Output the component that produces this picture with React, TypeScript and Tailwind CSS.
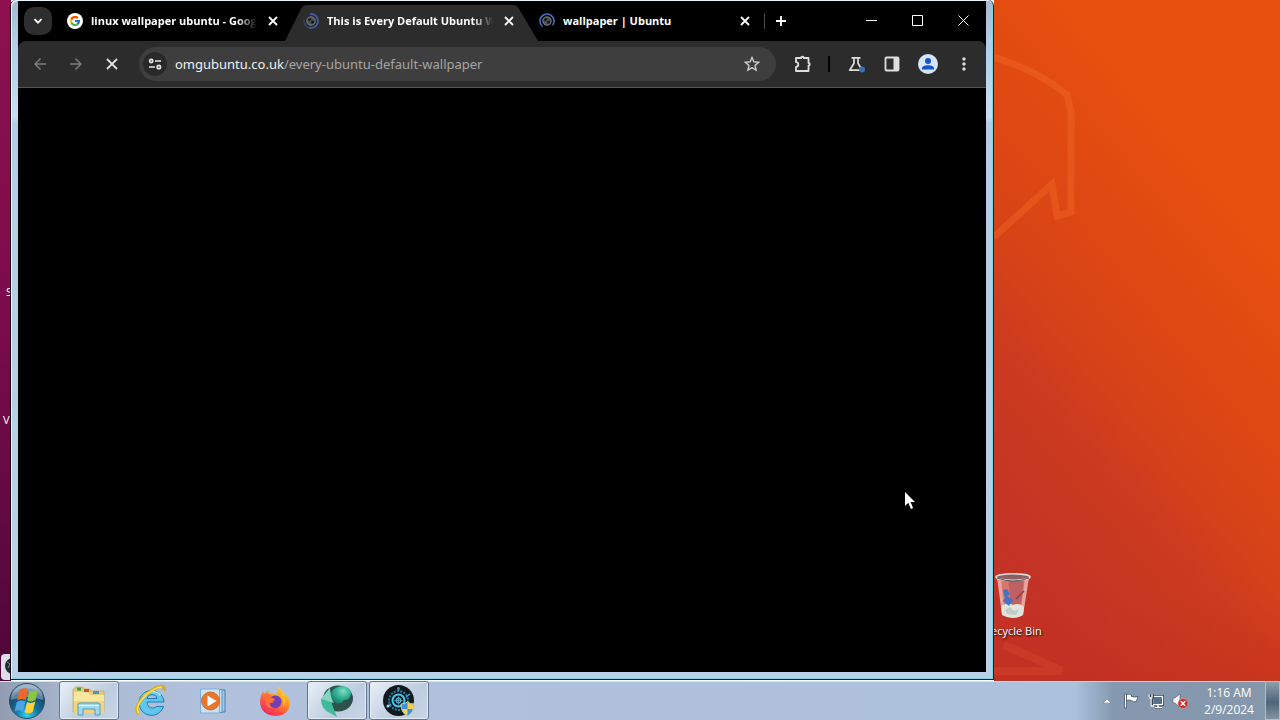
import type { ReactNode } from "react";
import { FcGoogle } from "react-icons/fc";
import {
  MdArrowBack,
  MdArrowForward,
  MdMoreVert,
  MdStarOutline,
} from "react-icons/md";

function LoadingIcon({ dim = false }: { dim?: boolean }) {
  return (
    <svg viewBox="0 0 16 16" className="size-4 shrink-0" fill="none" aria-hidden="true">
      <path
        d={dim ? "M7 1a7 7 0 0 1 8 7 7 7 0 0 1-9 6.7" : "M3.5 13.4A7 7 0 1 1 15 8c0 1.8-.5 3-1.4 4.3"}
        stroke={dim ? "#3f5fae" : "#4a6fc4"}
        strokeWidth="1.6"
      />
      {dim && <path d="M6 14.7A7 7 0 0 1 1 6.5" stroke="#33466f" strokeWidth="1.2" />}
      <circle cx="8" cy="8" r="4.6" fill="#4c5157" />
      <path d="M5 6l2.5-1 1 1.5-2 1.6L5 7.4zM8.5 8l3-.5-.6 2.4-2 1.2-.8-1.6z" fill="#16181b" />
      <circle cx="8" cy="8" r="4.2" stroke="#85898e" strokeWidth=".7" />
    </svg>
  );
}

function Glyph({ path, size, width }: { path: string; size: string; width: string }) {
  return (
    <svg viewBox="0 0 12 12" className={"shrink-0 " + size} fill="none" stroke="currentColor" strokeWidth={width} aria-hidden="true">
      <path d={path} />
    </svg>
  );
}

function Tab({
  icon,
  title,
  active = false,
  fade = false,
}: {
  icon: ReactNode;
  title: string;
  active?: boolean;
  fade?: boolean;
}) {
  return (
    <div role="tab" aria-selected={active} className="relative flex h-10 w-[236px] shrink-0 items-center pl-2">
      {active && (
        <svg
          viewBox="0 0 253 36"
          preserveAspectRatio="none"
          className="absolute bottom-0 -left-[10px] h-9 w-[253px]"
          aria-hidden="true"
        >
          <path d="M0 36L16 4Q18 0 22 0H228Q232 0 234 4L253 36z" fill="#2c2c2c" />
        </svg>
      )}
      <span className="relative flex shrink-0">{icon}</span>
      <span
        className={
          "relative ml-2 w-[166px] overflow-hidden text-[11px] leading-4 font-bold whitespace-nowrap text-white " +
          (fade ? "[mask-image:linear-gradient(to_right,black_88%,transparent)]" : "")
        }
      >
        {title}
      </span>
      <button type="button" aria-label={"Close " + title} className="relative ml-2 flex size-4 items-center justify-center text-white">
        <Glyph path="M2 2l8 8M10 2l-8 8" size="size-3" width="1.8" />
      </button>
    </div>
  );
}

function ToolButton({ label, children, dim = false }: { label: string; children: ReactNode; dim?: boolean }) {
  return (
    <button
      type="button"
      aria-label={label}
      className={"flex h-9 w-9 shrink-0 items-center justify-center " + (dim ? "text-[#7c7c7c]" : "text-[#dedede]")}
    >
      {children}
    </button>
  );
}

function CaptionButton({ label, path }: { label: string; path: string }) {
  return (
    <button type="button" aria-label={label} className="flex h-[38px] w-[46px] items-center justify-center">
      <svg viewBox="0 0 11 11" className="size-[11px]" fill="none" stroke="#fff" aria-hidden="true">
        <path d={path} />
      </svg>
    </button>
  );
}

function TabStrip() {
  return (
    <div className="flex h-10 items-center bg-black">
      <button
        type="button"
        aria-label="Search tabs"
        className="mr-[7px] ml-1.5 flex size-7 shrink-0 items-center justify-center rounded-[10px] bg-[#2e2e2e] text-white"
      >
        <Glyph path="M2.500 4.200L6 7.700l3.500-3.500" size="size-3" width="1.8" />
      </button>
      <div role="tablist" aria-label="Tabs" className="-mr-1 flex">
        <Tab
          icon={
            <span className="rounded-full bg-white p-0.5">
              <FcGoogle className="size-3" />
            </span>
          }
          title="linux wallpaper ubuntu - Goog"
          fade
        />
        <Tab icon={<LoadingIcon dim />} title="This is Every Default Ubuntu W" active fade />
        <Tab icon={<LoadingIcon />} title="wallpaper | Ubuntu" />
      </div>
      <span className="ml-px h-4 w-px bg-[#4a4a4a]" />
      <button type="button" aria-label="New tab" className="ml-2 flex size-4 items-center justify-center text-white">
        <Glyph path="M6 1v10M1 6h10" size="size-3" width="1.8" />
      </button>
      <div className="mb-0.5 ml-auto flex">
        <CaptionButton label="Minimize" path="M0 5.5h11" />
        <CaptionButton label="Maximize" path="M.5.5h10v10H.5z" />
        <CaptionButton label="Close" path="M.5.5l10 10M10.5.5l-10 10" />
      </div>
    </div>
  );
}

function Toolbar() {
  return (
    <div className="bg-black">
      <div className="flex h-[47px] items-center rounded-t-lg border-b border-[#555] bg-[#2c2c2c] px-1">
        <ToolButton label="Back" dim>
          <MdArrowBack className="size-[18px]" />
        </ToolButton>
        <ToolButton label="Forward" dim>
          <MdArrowForward className="size-[18px]" />
        </ToolButton>
        <ToolButton label="Stop loading">
          <Glyph path="M1 1l10 10M11 1L1 11" size="size-3" width="1.9" />
        </ToolButton>
        <div className="mr-[9px] ml-[9px] flex h-[34px] min-w-0 flex-1 items-center rounded-full bg-[#3e3e3e] pr-3.5 pl-1">
          <button
            type="button"
            aria-label="View site information"
            className="flex size-6 shrink-0 items-center justify-center rounded-full bg-[#292929]"
          >
            <svg viewBox="0 0 14 14" className="size-3.5" fill="none" stroke="#e8e8e8" strokeWidth="1.7" aria-hidden="true">
              <circle cx="3.2" cy="4" r="1.6" />
              <path d="M7 4h6M1 10h6" />
              <circle cx="10.8" cy="10" r="1.7" />
            </svg>
          </button>
          <div className="relative ml-2 min-w-0 flex-1 font-['Noto_Sans','Open_Sans',sans-serif] text-[13px] leading-5">
            <div aria-hidden="true" className="whitespace-nowrap text-[#a5a5a5]">
              <span className="text-[#f1f1f1]">omgubuntu.co.uk</span>/every-ubuntu-default-wallpaper
            </div>
            <input
              aria-label="Address and search bar"
              defaultValue="omgubuntu.co.uk/every-ubuntu-default-wallpaper"
              className="absolute inset-0 w-full bg-transparent text-transparent outline-none"
            />
          </div>
          <button type="button" aria-label="Bookmark this tab" className="text-[#d0d0d0]">
            <MdStarOutline className="size-5" />
          </button>
        </div>
        <ToolButton label="Extensions">
          <svg viewBox="0 0 18 18" className="size-[18px]" fill="none" stroke="currentColor" strokeWidth="1.8" strokeLinejoin="round" aria-hidden="true">
            <path d="M2 3h5.200a1.300 1.300 0 0 1 2.600 0H14.500v5a1.300 1.300 0 0 1 0 2.600V16H2v-4.200a2.300 2.300 0 0 0 0-4.600z" />
          </svg>
        </ToolButton>
        <span className="mr-2 ml-[7px] h-4 w-[2px] shrink-0 bg-black" />
        <ToolButton label="Experiments">
          <svg viewBox="0 0 18 18" className="size-[18px]" fill="none" stroke="#dedede" strokeWidth="1.700" aria-hidden="true">
            <path d="M4.500 2.800h9M7 3v5.200L2.700 15.200H14M11 3v5.200l3 5" strokeLinejoin="round" />
            <circle cx="15" cy="14.500" r="3" fill="#3472bd" stroke="none" />
          </svg>
        </ToolButton>
        <ToolButton label="Side panel">
          <svg viewBox="0 0 16 16" className="size-4" aria-hidden="true">
            <rect x="1.500" y="1.500" width="13" height="13" rx="1" fill="none" stroke="#dedede" strokeWidth="1.800" />
            <path d="M9.500 1.500h5v13h-5z" fill="#dedede" />
          </svg>
        </ToolButton>
        <ToolButton label="Profile">
          <svg viewBox="0 0 20 20" className="size-5" aria-hidden="true">
            <circle cx="10" cy="10" r="10" fill="#d5e5fb" />
            <circle cx="10" cy="7" r="3" fill="#1755ca" />
            <path d="M4 15.5v-1.2c0-1.9 2.7-3 6-3s6 1.1 6 3v1.2z" fill="#1755ca" />
          </svg>
        </ToolButton>
        <ToolButton label="Menu">
          <MdMoreVert className="size-5" />
        </ToolButton>
      </div>
    </div>
  );
}

function BrowserWindow() {
  return (
    <section
      aria-label="Browser"
      className="absolute top-0 bottom-px left-[11px] z-10 flex w-[983px] flex-col rounded-t-md border-r border-b border-[#10272f] bg-[linear-gradient(#a5b8d0,#b0cde9_40px,#c4def4_117px,#b3cde8_123px,#b9d2ea)] pt-px pr-[7px] pb-[7px] pl-[7px] shadow-[inset_1px_1px_0_#e9f5fc,inset_-1px_-1px_0_#83d4e0,-1px_0_0_#1b0a18]"
    >
      <TabStrip />
      <Toolbar />
      <main className="flex-1 bg-black" />
    </section>
  );
}

function RecycleBinIcon() {
  return (
    <svg viewBox="0 0 40 48" className="h-12 w-10" aria-hidden="true">
      <path d="M4 5L9 43Q20 49 30 43L36 5z" fill="#f2b7b2" opacity=".5" />
      <path d="M15 6L18 32H28L31 6z" fill="#8a3c50" opacity=".35" />
      <path d="M4 6L9 42 12 44 8 6zM32 6L27 44 30 43 36 6z" fill="#fff" opacity=".35" />
      <path d="M8 34Q14 30 20 33 26 30 31 35L30 43Q20 49 9 43z" fill="#dfe5dc" />
      <path d="M12 38l5-3 4 4 5-2-3 6-9-1z" fill="#c3cbc4" />
      <path d="M10 18l4-1 3 5-3 2 6 4-4 6-6-5 2-3z" fill="#2674d8" opacity=".85" />
      <path d="M31 19l-8 8" stroke="#8f3a46" strokeWidth="1.500" />
      <ellipse cx="20" cy="5" rx="17" ry="3.2" fill="#8d6163" stroke="#e6dbd9" strokeWidth="1.6" />
      <path d="M4 6Q20 12 36 6" fill="none" stroke="#5b5556" strokeWidth="1" />
    </svg>
  );
}

function Desktop() {
  return (
    <div className="relative flex flex-1 overflow-hidden">
      <div className="w-[11px] shrink-0 bg-[linear-gradient(#8d104e,#7c0c4c_45%,#4d0739)]" />
      <div className="relative ml-[983px] flex-1 bg-[linear-gradient(to_top,#c42c1a55,transparent_12%),linear-gradient(50deg,#c23226_12%,#cc3b1f_34%,#d84417_46%,#e24b10_64%,#e9520e_80%)]">
        <svg viewBox="0 0 286 681" className="absolute top-0 left-0 h-[681px] w-[286px]" fill="none" aria-hidden="true">
          <path d="M0 57Q46 72 73 95L77 112V212L63 216L58 184L0 237" stroke="#f26b25" strokeOpacity=".4" strokeWidth="7" />
          <path d="M10 645L68 671H0" stroke="#e55235" strokeOpacity=".25" strokeWidth="8" />
        </svg>
      </div>
      <div className="absolute top-[572px] left-[975px] flex w-[76px] flex-col items-center text-[11px] leading-4 text-white [text-shadow:1px_1px_2px_#000]">
        <RecycleBinIcon />
        <span className="mt-[3px] whitespace-nowrap">Recycle Bin</span>
      </div>
      <span className="absolute top-[284px] left-1.5 text-[11px] leading-4 text-white">S</span>
      <span className="absolute top-[412px] left-[3px] text-[11px] leading-4 text-white">V</span>
      <svg viewBox="0 0 20 27" className="absolute top-[654px] left-0 h-[27px] w-5" aria-hidden="true">
        <rect x="1" y="0" width="22" height="26" rx="4" fill="#dcdde6" />
        <circle cx="13" cy="12" r="8" fill="#1d2b32" />
        <path d="M7 8l3 2-2 4" fill="none" stroke="#7d9299" />
      </svg>
      <BrowserWindow />
      <svg viewBox="0 0 12 20" className="absolute top-[491px] left-[904px] z-20 h-5 w-3" aria-hidden="true">
        <path d="M1 1v14l3.3-3.2 2.6 6.2 2.2-1L6.6 11H11z" fill="#fff" />
      </svg>
    </div>
  );
}

function StartIcon() {
  return (
    <svg viewBox="0 0 38 38" className="size-[38px]" aria-hidden="true">
      <defs>
        <radialGradient id="orb" cx=".5" cy=".9" r=".8">
          <stop offset="0" stopColor="#35d3f0" />
          <stop offset=".4" stopColor="#12759f" />
          <stop offset=".8" stopColor="#1d4668" />
          <stop offset="1" stopColor="#7f9db8" />
        </radialGradient>
      </defs>
      <circle cx="19" cy="19" r="17.5" fill="url(#orb)" stroke="#2d4c68" />
      <path d="M3 18a16 16 0 0 1 32 0q-16-6-32 0z" fill="#c9dbe8" opacity=".4" />
      <path d="M11.500 8q4.500-3 8.500-.5L17.700 18q-4.500-2-8.700.5z" fill="#ee682b" />
      <path d="M21.500 8.200q4.500 2 8.500-.5L27.500 18q-4 2.500-8.300.5z" fill="#8cc63e" />
      <path d="M8.800 19.900q4.200-2.700 8.700-.5L15 29.500q-4-2.500-8.500.3z" fill="#4ba4e5" />
      <path d="M19 20q4 2 8.300-.5L24.700 30q-4.200 2.500-8.200.3z" fill="#fbd13c" />
    </svg>
  );
}

function ExplorerIcon() {
  return (
    <svg viewBox="0 0 36 32" className="h-8 w-9" aria-hidden="true">
      <path d="M4 4V2h8l1 2h6l1 2h13v21H2V4z" fill="#e7cc72" stroke="#c6a64d" strokeWidth=".7" />
      <path d="M6 2.500h4v3H6z" fill="#3a9a54" />
      <path d="M13 4h5v3h-5z" fill="#cc5135" />
      <path d="M22 6h6v3h-6z" fill="#4e8ed0" />
      <path d="M3 7h14l2 3h14v18H3z" fill="#f7e7a1" />
      <path d="M3 16h30v12H3z" fill="#eed47d" />
      <path d="M7 30V20q0-2 2-2h18q2 0 2 2v10h-5v-6H12v6z" fill="#a2d8ef" stroke="#4d9cc6" />
      <path d="M8 20.500h20" stroke="#e8f8ff" />
    </svg>
  );
}

function InternetExplorerIcon() {
  return (
    <svg viewBox="0 0 32 32" className="size-8" fill="none" aria-hidden="true">
      <path
        d="M28.500 21.500A12.500 12.500 0 1 1 29 17H12q.5 6 5.500 6 3 0 4-1.500zM12 13.500h10q-.5-4-5-4t-5 4z"
        fill="#62c6ec"
        stroke="#1880b9"
        fillRule="evenodd"
      />
      <path d="M7 13q3-6 10-6.500 6 0 8.500 4" stroke="#b0ebfb" strokeWidth="1.500" />
      <path d="M4 29Q-2 24 9 11.500 20 1 27 1.500q3 .5 2 4" stroke="#d9a916" strokeWidth="3" />
      <path d="M4 28.500Q-1 23 9.500 11.500 20 2 27 2" stroke="#fbe353" strokeWidth="1.700" />
    </svg>
  );
}

function MediaPlayerIcon() {
  return (
    <svg viewBox="0 0 28 26" className="h-[26px] w-7" aria-hidden="true">
      <path d="M7 2h19v22H7z" fill="#a5c6e4" stroke="#3f80b5" />
      <path d="M4 1.500h19v23H4z" fill="#c9dfef" stroke="#5797c8" />
      <path d="M1.500 1h19v24h-19z" fill="#cfe1f0" stroke="#78b1d7" />
      <circle cx="11.500" cy="13" r="9" fill="#ea762b" stroke="#cf5a18" strokeWidth=".8" />
      <path d="M8.500 7.500l9 5.500-9 5.500z" fill="#fff" />
    </svg>
  );
}

function FirefoxIcon() {
  return (
    <svg viewBox="0 0 32 32" className="size-8" aria-hidden="true">
      <defs>
        <linearGradient id="fox" x1=".85" y1="0" x2=".2" y2="1">
          <stop offset="0" stopColor="#ffdd38" />
          <stop offset=".4" stopColor="#ff9625" />
          <stop offset=".75" stopColor="#ff4548" />
          <stop offset="1" stopColor="#e52572" />
        </linearGradient>
      </defs>
      <path d="M20 1q1 4 4 6 6 4 7 11Q30 31 16 31 2 30 1 17 1 11 4 6l1 3 4-4q0 3 2 4 4-1 7 1-1-5 2-9z" fill="url(#fox)" />
      <path d="M10 14q4-5 9-3 5 3 3 8t-7 4-6-6q3 2 6 0-3-1-5-3z" fill="#7140b8" />
      <path d="M4 10q4-3 8 0l-1 2 5 2q-1 3-5 3-1 4 3 6-8 1-8-9z" fill="#ff7139" />
      <path d="M24 8q3 4 2 10l-2 5q2-10-3-13z" fill="#ffc735" opacity=".8" />
    </svg>
  );
}

function TealSphereIcon() {
  return (
    <svg viewBox="0 0 34 34" className="size-[34px]" aria-hidden="true">
      <defs>
        <radialGradient id="teal" cx=".6" cy=".3" r=".7">
          <stop offset="0" stopColor="#80dec0" />
          <stop offset=".5" stopColor="#35b396" />
          <stop offset="1" stopColor="#1a7f6e" />
        </radialGradient>
      </defs>
      <ellipse cx="18" cy="14.500" rx="15" ry="13" fill="#2f514c" />
      <path d="M11 9q3-7 12-7 9 2 8 8-1 6-7 6-3 5-8 3-5-3-5-10z" fill="url(#teal)" />
      <path d="M10 4L1 15q0 10 9 14l7 4-2-5q-5-11-5-24z" fill="#3dbb9b" />
      <path d="M10 4L1 15q5 1 13 4-4-6-4-15z" fill="#82d8bf" />
    </svg>
  );
}

function BlueGearIcon() {
  return (
    <svg viewBox="0 0 34 34" className="size-[34px]" fill="none" aria-hidden="true">
      <circle cx="16.500" cy="16.500" r="15.500" fill="#11191f" />
      <circle cx="16.500" cy="16.500" r="9.500" stroke="#277ca1" strokeWidth="2" strokeDasharray="2 1.300" />
      <circle cx="16.500" cy="16.500" r="6" stroke="#43c8f3" strokeWidth="2" />
      <circle cx="16.500" cy="16.500" r="2.500" stroke="#79d8f7" />
      <path d="M16.500 7V3M9 20l-4 3M24 13l4-3M12.500 16.500h8M16.500 12.500v8" stroke="#54a9c4" strokeWidth="1.200" />
      <circle cx="16.500" cy="4.500" r="1.500" fill="#557f94" />
      <circle cx="6" cy="22" r="1.500" fill="#9fdcf4" />
      <path d="M19 20q4 0 6.500-2 3 2 6.500 2 0 9-6.500 12-6.500-3-6.500-12z" fill="#3e91d2" stroke="#d2cc9e" />
      <path d="M25.500 18.700q3 1.700 6 1.800l-.6 4.500h-5.400zM19.800 25h5.700v6.300q-4.500-2-5.700-6.300z" fill="#f5ce52" />
    </svg>
  );
}

function TaskButton({ label, running = false, children }: { label: string; running?: boolean; children: ReactNode }) {
  return (
    <button
      type="button"
      aria-label={label}
      className={
        "flex h-[39px] w-[60px] items-center justify-center rounded-[3px] " +
        (running
          ? "border border-[#64768d] bg-[linear-gradient(135deg,#eaf0f7,#bdcce0_60%,#c9d5e6)] shadow-[inset_0_0_0_1px_#e2ecf6]"
          : "")
      }
    >
      {children}
    </button>
  );
}

function Tray() {
  return (
    <div className="ml-auto flex h-full items-center">
      <button type="button" aria-label="Show hidden icons" className="mr-3">
        <svg viewBox="0 0 8 5" className="h-[5px] w-2" aria-hidden="true">
          <path d="M0 5l4-4 4 4z" fill="#fff" stroke="#52667d" strokeWidth=".5" />
        </svg>
      </button>
      <button type="button" aria-label="Action Center" className="mr-2">
        <svg viewBox="0 0 16 16" className="size-4" aria-hidden="true">
          <path d="M1.500 1h2v14h-2z" fill="#fff" stroke="#344354" strokeWidth=".7" />
          <path d="M3.500 1.500q3-1 5 .5v1.500q3 1 6.500 0l-1.700 5q-3 1-5-1-2-1-4.800 0z" fill="#fff" stroke="#344354" strokeWidth=".7" />
        </svg>
      </button>
      <button type="button" aria-label="Network" className="mr-2">
        <svg viewBox="0 0 17 16" className="h-4 w-[17px]" fill="none" aria-hidden="true">
          <path d="M6 3.500h9.500v8H6M8 14.500h7M11 12v2" stroke="#334457" strokeWidth="3" />
          <path d="M6 3.500h9.500v8H6M8 14.500h7M11 12v2" stroke="#fff" strokeWidth="1.400" />
          <path d="M7 5h7v5H7z" fill="#557187" />
          <path d="M1 1v3h1v2h1v8h3V6h1V4h0V1z" fill="#334457" />
          <path d="M2 1v3M5 1v3M2 5h3.500M4 5v8h3" stroke="#fff" strokeWidth="1.300" />
        </svg>
      </button>
      <button type="button" aria-label="Volume muted">
        <svg viewBox="0 0 17 16" className="h-4 w-[17px]" aria-hidden="true">
          <path d="M1 5h2l5-4v13l-5-4H1z" fill="#fff" stroke="#45566a" strokeWidth=".6" />
          <circle cx="11" cy="10.500" r="5" fill="#d52c2a" stroke="#f0a099" strokeWidth=".6" />
          <path d="M8.800 8.300l4.400 4.400m0-4.400l-4.400 4.400" stroke="#fff" strokeWidth="1.500" />
        </svg>
      </button>
      <time dateTime="2024-02-09T01:16" className="ml-2 w-[64px] text-center text-[12px] leading-[17px] text-white">
        1:16 AM
        <br />
        2/9/2024
      </time>
      <button
        type="button"
        aria-label="Show desktop"
        className="ml-1 h-full w-[15px] border border-[#b1bfcc] bg-[linear-gradient(#8d9eac,#4f6578_55%,#83939f)]"
      />
    </div>
  );
}

function Taskbar() {
  return (
    <footer className="flex h-[39px] shrink-0 items-center bg-[linear-gradient(to_right,#929db1,#a8b8cf_70px,#b1c1dc_200px,#adc0dc_80%,#aac1dc_84%,#8498b0_87%,#8497ab)] shadow-[inset_0_1px_0_#d4e1ef]">
      <button type="button" aria-label="Start" className="mr-[13px] ml-2 shrink-0">
        <StartIcon />
      </button>
      <nav aria-label="Taskbar" className="flex gap-0.5">
        <TaskButton label="Windows Explorer" running>
          <ExplorerIcon />
        </TaskButton>
        <TaskButton label="Internet Explorer">
          <InternetExplorerIcon />
        </TaskButton>
        <TaskButton label="Windows Media Player">
          <MediaPlayerIcon />
        </TaskButton>
        <TaskButton label="Firefox">
          <FirefoxIcon />
        </TaskButton>
        <TaskButton label="Chromium" running>
          <TealSphereIcon />
        </TaskButton>
        <TaskButton label="System tool" running>
          <BlueGearIcon />
        </TaskButton>
      </nav>
      <Tray />
    </footer>
  );
}

export default function App() {
  return (
    <div className="flex min-h-screen flex-col overflow-hidden font-['Open_Sans','Noto_Sans',sans-serif]">
      <Desktop />
      <Taskbar />
    </div>
  );
}
